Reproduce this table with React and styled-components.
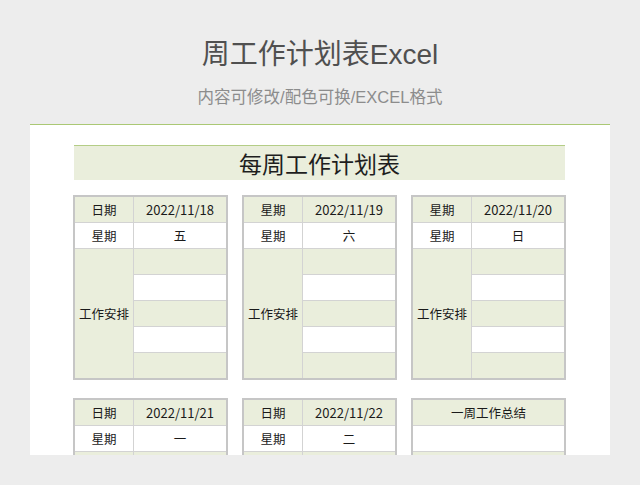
import React from "react";
import styled, { createGlobalStyle } from "styled-components";

const Global = createGlobalStyle`
  html, body { margin: 0; padding: 0; background: #ededed; }
  body { font-family: "Noto Sans CJK SC", "Noto Sans", sans-serif; }
`;

const Page = styled.div`
  width: 640px;
  height: 485px;
  overflow: hidden;
  display: flex;
  flex-direction: column;
  align-items: center;
  background: #ededed;
`;

const Title = styled.h1`
  margin: 37px 0 0;
  height: 36px;
  line-height: 36px;
  font-size: 28px;
  font-weight: 400;
  color: #505050;
  font-family: "Liberation Sans", "Noto Sans CJK SC", sans-serif;
  white-space: nowrap;
`;

const Subtitle = styled.div`
  margin-top: 13px;
  height: 22px;
  line-height: 22px;
  font-size: 16.5px;
  color: #8c8c8c;
  font-family: "Liberation Sans", "Noto Sans CJK SC", sans-serif;
  white-space: nowrap;
`;

const Panel = styled.div`
  margin-top: 16px;
  width: 580px;
  height: 331px;
  box-sizing: border-box;
  overflow: hidden;
  background: #fff;
  border-top: 1px solid #aac874;
  padding: 20px 44px 0 43px;
`;

const Banner = styled.div`
  margin: 0 1px;
  height: 35px;
  box-sizing: border-box;
  border-top: 1px solid #b4cd86;
  background: #eaeedc;
  display: flex;
  align-items: center;
  justify-content: center;
  font-size: 23px;
  color: #1e1e1e;
`;

const Cards = styled.div`
  margin-top: 15px;
  display: grid;
  grid-template-columns: repeat(3, 155px);
  column-gap: 14px;
  row-gap: 18px;
`;

const Card = styled.div`
  display: grid;
  grid-template-columns: ${(p) => (p.$single ? "1fr" : "58px 1fr")};
  grid-auto-rows: 25px;
  gap: 1px;
  background: #d3d3d3;
  border: 2px solid #c6c6c6;
  color: #1a1a1a;
`;

const Cell = styled.div`
  display: flex;
  align-items: center;
  justify-content: center;
  background: ${(p) => (p.$green ? "#eaeedc" : "#fff")};
  grid-row: ${(p) => (p.$span ? `span ${p.$span}` : "auto")};
  font-size: ${(p) => (p.$num ? "13px" : "12.5px")};
`;

const days = [
  { label: "日期", date: "2022/11/18", day: "五" },
  { label: "星期", date: "2022/11/19", day: "六" },
  { label: "星期", date: "2022/11/20", day: "日" },
  { label: "日期", date: "2022/11/21", day: "一" },
  { label: "日期", date: "2022/11/22", day: "二" },
];

function DayCard({ label, date, day }) {
  return (
    <Card>
      <Cell $green>{label}</Cell>
      <Cell $green $num>{date}</Cell>
      <Cell>星期</Cell>
      <Cell>{day}</Cell>
      <Cell $green $span={5}>工作安排</Cell>
      <Cell $green />
      <Cell />
      <Cell $green />
      <Cell />
      <Cell $green />
    </Card>
  );
}

export default function App() {
  return (
    <>
      <Global />
      <Page>
        <Title>周工作计划表Excel</Title>
        <Subtitle>内容可修改/配色可换/EXCEL格式</Subtitle>
        <Panel>
          <Banner>每周工作计划表</Banner>
          <Cards>
            {days.map((d) => (
              <DayCard key={d.date} {...d} />
            ))}
            <Card $single>
              <Cell $green>一周工作总结</Cell>
              <Cell />
              <Cell $green />
              <Cell />
              <Cell $green />
              <Cell />
              <Cell $green />
            </Card>
          </Cards>
        </Panel>
      </Page>
    </>
  );
}
